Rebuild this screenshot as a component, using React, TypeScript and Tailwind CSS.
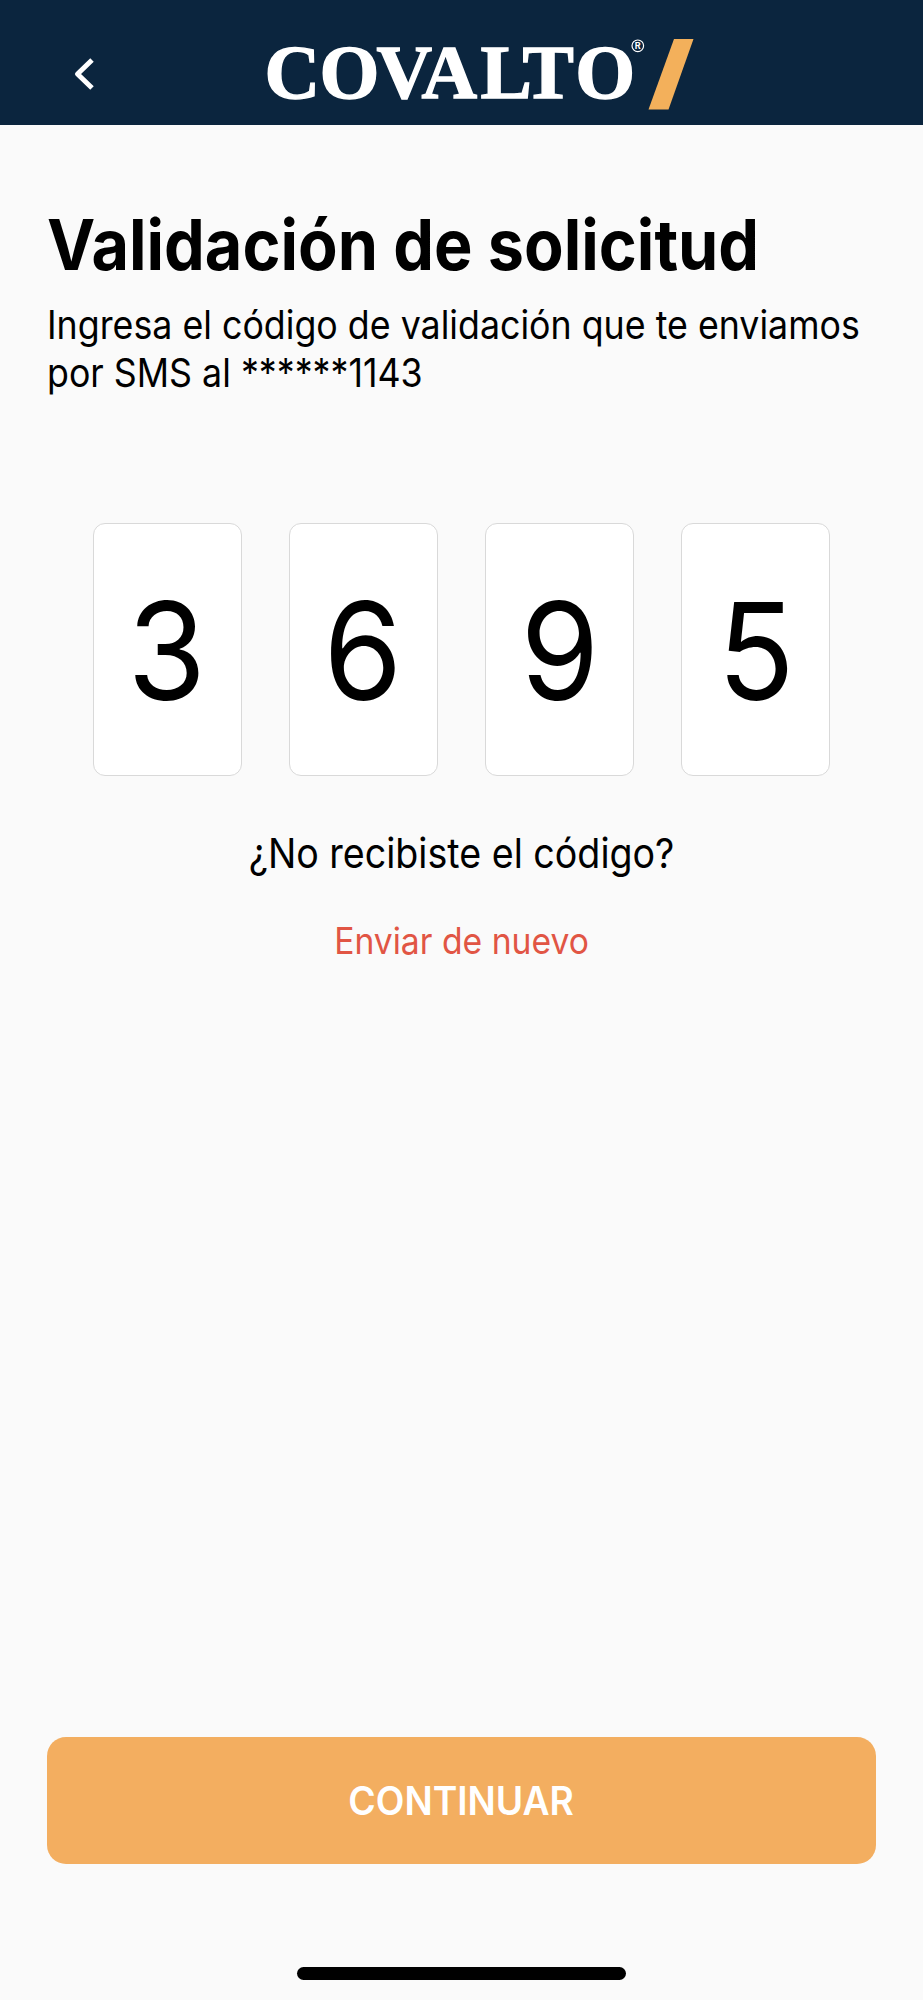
const digits = ["3", "6", "9", "5"];

function Logo() {
  return (
    <svg
      width="440"
      height="100"
      viewBox="260 20 440 100"
      role="img"
      aria-label="Covalto"
    >
      <text
        x="264.5 319.5 376.5 421.5 480.5 522.5 575.2"
        y="98"
        fill="#fff"
        stroke="#fff"
        strokeWidth="1.4"
        fontSize="77"
        fontWeight="700"
        fontFamily="'Liberation Serif', serif"
      >
        COVALTO
      </text>
      <circle cx="637.8" cy="45.8" r="5.8" fill="none" stroke="#fff" strokeWidth="1.2" />
      <text
        x="634.8"
        y="49.3"
        fill="#fff"
        fontSize="9"
        fontWeight="700"
        fontFamily="Inter, sans-serif"
      >
        R
      </text>
      <path d="M674 39H693.5L668.5 109.5H648.5Z" fill="#f3b05b" />
    </svg>
  );
}

export default function App() {
  return (
    <div className="flex h-[2000px] w-[923px] flex-col overflow-hidden bg-[#fafafa] font-['Inter',sans-serif] text-black">
      <header className="flex h-[124.5px] shrink-0 items-start bg-[#0b253e]">
        <button className="ml-[72px] mt-[56px] w-[188px]" aria-label="Regresar">
          <svg width="26" height="36" viewBox="0 0 26 36" fill="none">
            <path
              d="M20 4L5.5 18L20 32"
              stroke="#fff"
              strokeWidth="5"
              strokeLinejoin="round"
            />
          </svg>
        </button>
        <div className="mt-5">
          <Logo />
        </div>
      </header>

      <main className="flex flex-1 flex-col px-[47px]">
        <h1 className="mt-[78px] origin-left scale-x-[0.924] whitespace-nowrap text-[70px] font-bold leading-[84px]">
          Validación de solicitud
        </h1>
        <p className="mt-[14.5px] origin-left scale-x-[0.917] whitespace-nowrap text-[39px] leading-[48px]">
          Ingresa el código de validación que te enviamos
          <br />
          por SMS al ******1143
        </p>

        <div className="mt-[126px] flex justify-between px-[45.5px]">
          {digits.map((digit) => (
            <div
              key={digit}
              className="flex h-[253px] w-[149px] items-center justify-center rounded-xl border border-[#d9d9d9] bg-white pt-1"
            >
              <span className="scale-x-[0.94] text-[135px] leading-none">{digit}</span>
            </div>
          ))}
        </div>

        <p className="mt-[52px] scale-x-[0.917] text-center text-[41px] leading-[50px]">
          ¿No recibiste el código?
        </p>
        <button className="mt-[41px] scale-x-[0.91] text-[37px] leading-[44px] text-[#e15544]">
          Enviar de nuevo
        </button>

        <button className="mb-[103px] mt-auto flex h-[127px] items-center justify-center rounded-[19px] bg-[#f3ae60] text-white">
          <span className="scale-x-[0.955] pt-0.5 text-[39px] font-semibold">CONTINUAR</span>
        </button>
      </main>

      <div className="mb-[20.5px] h-[12.5px] w-[329px] shrink-0 self-center rounded-full bg-black" />
    </div>
  );
}
